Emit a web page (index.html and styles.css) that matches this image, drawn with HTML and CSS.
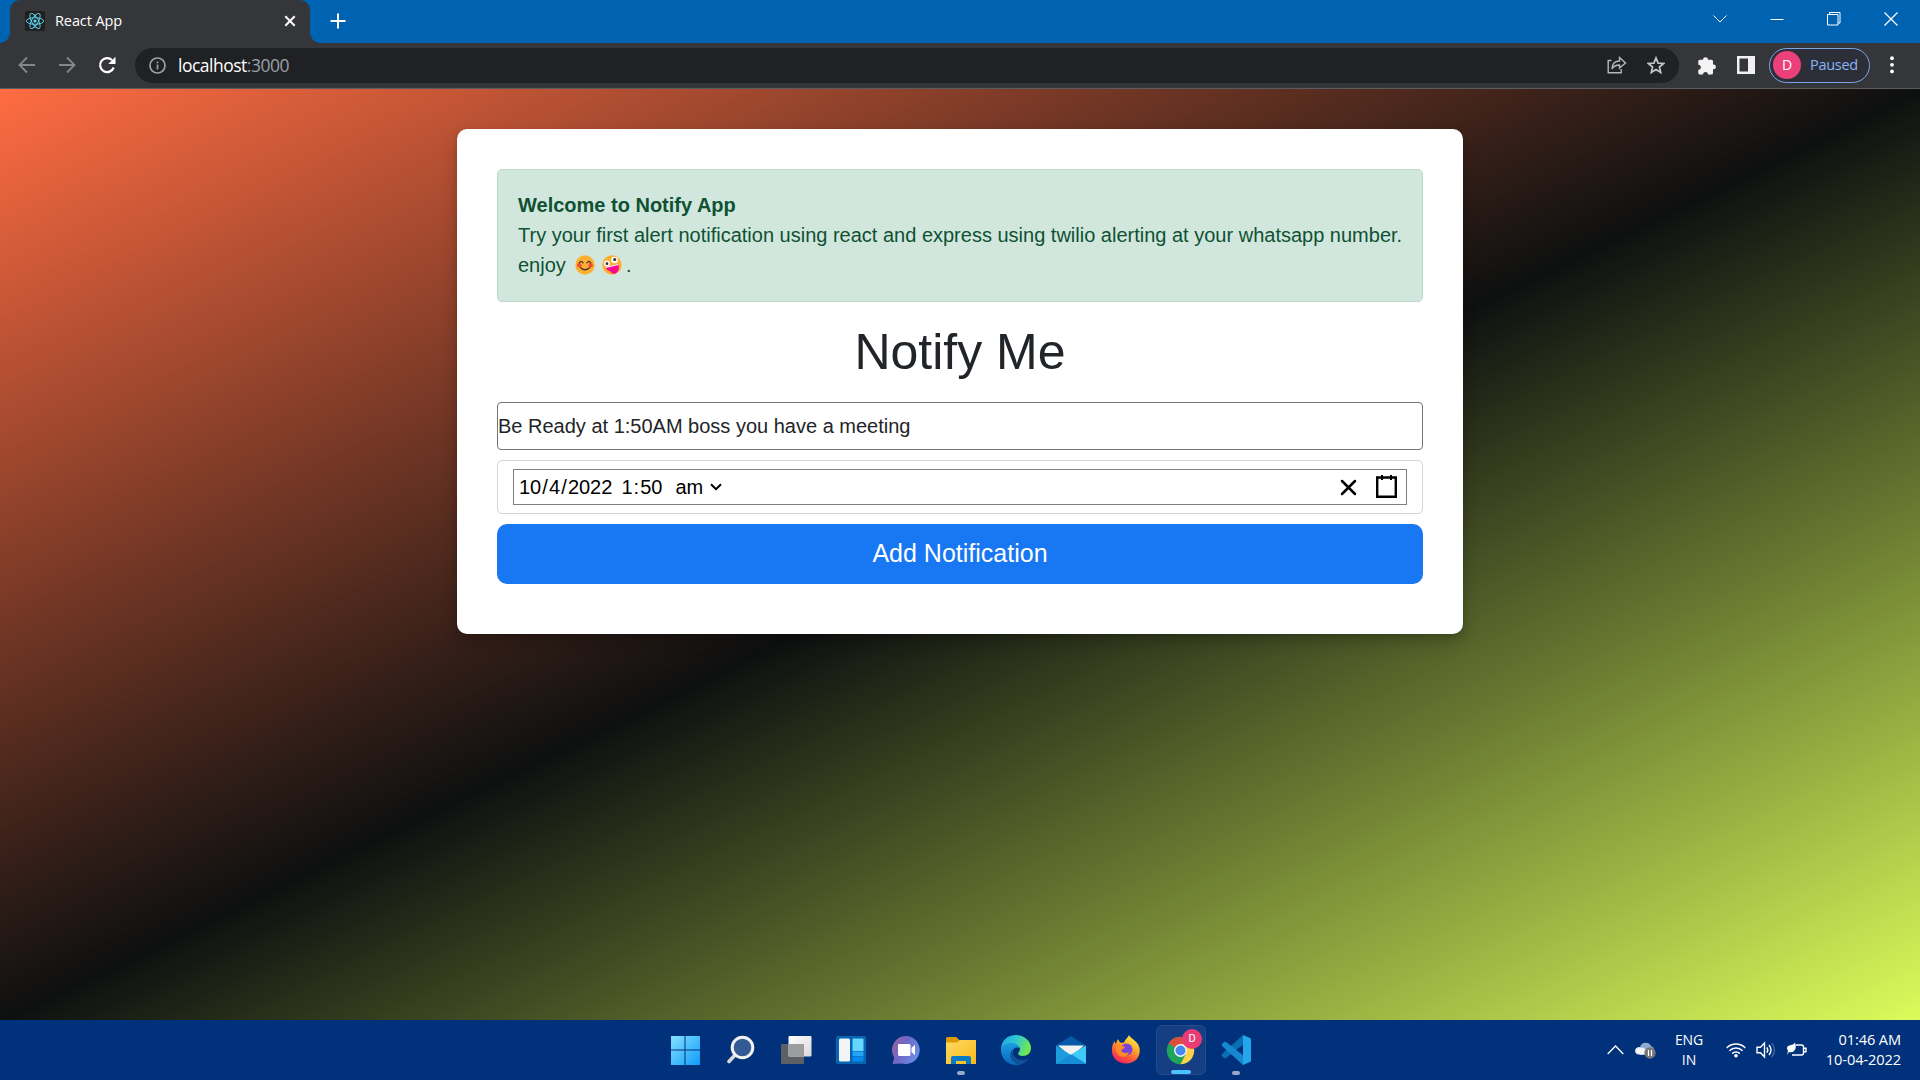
FILE: index.html
```html
<!DOCTYPE html>
<html lang="en">
<head>
<meta charset="utf-8">
<title>React App</title>
<link rel="stylesheet" href="styles.css">
</head>
<body>
<header class="tabstrip">
  <div class="tab">
    <svg class="favicon" width="20" height="20" viewBox="0 0 20 20"><rect width="20" height="20" rx="2" fill="#202020"/><g fill="none" stroke="#61dafb" stroke-width=".9"><ellipse cx="10" cy="10" rx="8.6" ry="3.3"/><ellipse cx="10" cy="10" rx="8.6" ry="3.3" transform="rotate(60 10 10)"/><ellipse cx="10" cy="10" rx="8.6" ry="3.3" transform="rotate(120 10 10)"/></g><circle cx="10" cy="10" r="1.6" fill="#61dafb"/></svg>
    <span class="tab-title">React App</span>
    <svg width="12" height="12" viewBox="0 0 12 12" stroke="#fff" stroke-width="2"><path d="M1.3 1.3l9.4 9.4M10.7 1.3l-9.4 9.4"/></svg>
  </div>
  <svg class="new-tab" width="16" height="16" viewBox="0 0 16 16" stroke="#fff" stroke-width="2"><path d="M8 .5v15M.5 8h15"/></svg>
  <div class="window-controls">
    <svg width="14" height="8" viewBox="0 0 14 8" fill="none" stroke="#fff"><path d="M.5.5L7 7 13.500.5"/></svg>
    <svg width="14" height="14" viewBox="0 0 14 14" stroke="#fff"><path d="M.5 7.500h13"/></svg>
    <svg width="14" height="14" viewBox="0 0 14 14" fill="none" stroke="#fff"><path d="M.5 2.500h10.500v10.500H.5zM2.500 2.500V.5H13v10.500h-2"/></svg>
    <svg width="14" height="14" viewBox="0 0 14 14" stroke="#fff" stroke-width="1.200"><path d="M.5.5l13 13M13.500.5l-13 13"/></svg>
  </div>
</header>
<nav class="toolbar">
  <div class="nav-buttons">
    <svg width="18" height="18" viewBox="0 0 18 18" fill="none" stroke="#85878a" stroke-width="1.800"><path d="M17 9H2M9 1.500L1.500 9 9 16.500"/></svg>
    <svg width="18" height="18" viewBox="0 0 18 18" fill="none" stroke="#85878a" stroke-width="1.800"><path d="M1 9h15M9 1.500L16.500 9 9 16.500"/></svg>
    <svg width="18" height="18" viewBox="0 0 18 18"><path d="M15.700 11.500A7 7 0 1 1 14 4" fill="none" stroke="#fff" stroke-width="2.200"/><path d="M17.500.7V8h-7.300z" fill="#fff"/></svg>
  </div>
  <div class="address">
    <svg width="17" height="17" viewBox="0 0 17 17" fill="none" stroke="#9aa0a6" stroke-width="1.700"><circle cx="8.500" cy="8.500" r="7.500"/><path d="M8.500 7.600v5M8.500 4.400v1.900"/></svg>
    <span class="url">localhost<i>:3000</i></span>
    <svg width="20" height="18" viewBox="0 0 20 18" fill="none" stroke="#b5b7b9" stroke-width="1.400"><path d="M4.500 4.500H1.200v12.300h13V13M5 13c.2-5 3-8 7.500-8V1.500L18.500 7l-6 5V9C9 9 6.500 10.300 5 13z"/></svg>
    <svg class="star" width="18" height="18" viewBox="0 0 18 18" fill="none" stroke="#c4c5c6" stroke-width="1.700"><path d="M9 1.900l2.100 5.200 5.500.4-4.200 3.600 1.300 5.400L9 13.600l-4.700 2.900 1.300-5.400L1.400 7.500l5.500-.4z"/></svg>
  </div>
  <div class="tools">
    <svg width="18" height="19" viewBox="0 0 18 19" fill="#f3f3f4"><path d="M5 3.700a2.500 2.500 0 0 1 5 0h3.500Q15 3.700 15 5.200v3.300h.5a2.400 2.400 0 0 1 0 4.800H15V17q0 1.500-1.500 1.500H10a2.500 2.500 0 0 0-5 0H1.800Q.3 18.500.3 17v-3.300a2.500 2.500 0 0 0 0-5V5.200Q.3 3.700 1.800 3.700z"/></svg>
    <svg width="18" height="18" viewBox="0 0 18 18"><path d="M0 0h18v18H0zM2.500 2.500v13H11v-13z" fill="#f1f1f2" fill-rule="evenodd"/></svg>
    <div class="profile"><b>D</b><span>Paused</span></div>
    <svg width="4" height="18" viewBox="0 0 4 18" fill="#fff"><circle cx="2" cy="2.200" r="1.900"/><circle cx="2" cy="8.800" r="1.900"/><circle cx="2" cy="15.400" r="1.900"/></svg>
  </div>
</nav>
<main class="page">
  <section class="card">
    <div class="alert"><strong>Welcome to Notify App</strong><p>Try your first alert notification using react and express using twilio alerting at your whatsapp number.<br>enjoy <svg class="emoji smile" width="20" height="20" viewBox="0 0 20 20"><circle cx="10" cy="10" r="9.700" fill="#fdb02f"/><g fill="#f5483b"><circle cx="4.300" cy="10.300" r="2.200"/><circle cx="15.700" cy="10.300" r="2.200"/></g><path d="M4.300 7.800q1.800-3 3.800 0M11.900 7.800q2-3 3.800 0M5.500 12.800q4.500 4 9 0" fill="none" stroke="#512c31" stroke-width="1.300" stroke-linecap="round"/></svg><svg class="emoji" width="20" height="20" viewBox="0 0 20 20"><circle cx="10" cy="10" r="9.700" fill="#fdb02f"/><path d="M3.500 12l12.700-3c1.600 4.500.2 8.300-3 9.700-2.500.7-4.500-1-5.200-2.700-2 0-3.800-1.500-4.500-4z" fill="#f70a8d"/><path d="M3.500 12l12.700-3 .2 1L3.800 13z" fill="#fff"/><circle cx="5" cy="8.500" r="2.900" fill="#fff"/><circle cx="12.500" cy="5" r="3.300" fill="#fff"/><circle cx="5" cy="8.700" r="1.400" fill="#402a32"/><circle cx="12.700" cy="4.500" r="1.600" fill="#402a32"/></svg>.</p></div>
    <h1>Notify Me</h1>
    <div class="message">Be Ready at 1:50AM boss you have a meeting</div>
    <div class="picker"><div class="datetime">
      <span class="date">10<i>/</i>4<i>/</i>2022</span><span class="time">1<i>:</i>50</span><span class="ampm">am</span>
      <svg width="12" height="8" viewBox="0 0 12 8" fill="none" stroke="#000" stroke-width="2"><path d="M1 1.200l5 5 5-5"/></svg>
      <svg class="clear" width="19" height="19" viewBox="0 0 19 19" stroke="#000" stroke-width="2.500" stroke-linecap="round"><path d="M3 3l13 13M16 3L3 16"/></svg>
      <svg class="calendar" width="21" height="23" viewBox="0 0 21 23"><path d="M1.200 2.500h18.600v19.200H1.200z" fill="none" stroke="#000" stroke-width="2.400"/><path d="M5 0h2v5H5zM14 0h2v5h-2z"/></svg>
    </div></div>
    <button class="submit">Add Notification</button>
  </section>
</main>
<footer class="taskbar">
  <div class="side"></div>
  <div class="apps">
    <div class="app"><svg width="30" height="30" viewBox="0 0 30 30"><defs><linearGradient id="win" x2="1" y2="1" gradientUnits="objectBoundingBox"><stop stop-color="#85e1fe"/><stop offset="1" stop-color="#0d9bfa"/></linearGradient></defs><path d="M1.500 1H14.500V14.500H1V1.500zM15.500 1H29.500L30 1.500V14.500H15.500zM1 15.500H14.500V30H1zM15.500 15.500H30V30H15.500z" fill="url(#win)"/></svg></div>
    <div class="app"><svg width="28" height="30" viewBox="0 0 28 30"><path d="M9 19L2 26.500" stroke="#d5d8dd" stroke-width="3.600" stroke-linecap="round"/><circle cx="15.500" cy="12.500" r="10.300" fill="#335a94" stroke="#f2f2f2" stroke-width="3"/></svg></div>
    <div class="app"><svg width="31" height="30" viewBox="0 0 31 30"><defs><linearGradient id="view" x2="1" y2="1"><stop stop-color="#fff"/><stop offset="1" stop-color="#d9d9d9"/></linearGradient></defs><rect y="9" width="23" height="20" rx="1" fill="#5d6065"/><rect x="7.500" y="1" width="23" height="20.500" rx="1" fill="url(#view)"/><path d="M7.500 9H23v12.500H7.500z" fill="#9b9ea1"/></svg></div>
    <div class="app"><svg width="30" height="30" viewBox="0 0 30 30"><rect y="1" width="30" height="28" rx="1.500" fill="#0865b1"/><rect x="3" y="3.500" width="11" height="23" rx="1.500" fill="#f2f4f6"/><path d="M16.500 4.500q0-1 1-1h9q1 0 1 1V16h-11z" fill="#64d6ff"/><path d="M16.500 16.500h11V21h-11z" fill="#25a5f5"/><path d="M16.500 21.500h11v4q0 1-1 1h-9q-1 0-1-1z" fill="#0889ef"/></svg></div>
    <div class="app"><svg width="30" height="30" viewBox="0 0 30 30"><defs><linearGradient id="chat" x2="1" y2=".5"><stop stop-color="#9c619f"/><stop offset=".5" stop-color="#7067c7"/><stop offset="1" stop-color="#698be5"/></linearGradient></defs><path d="M15 1a14 14 0 1 1-4 27.500L1.500 29l1.700-6.500A14 14 0 0 1 15 1z" fill="url(#chat)"/><path d="M7 10q0-1 1-1h10q1.500 0 1.500 1.500v9q0 1.500-1.500 1.500H8.500Q7 21 7 19.500zM20.500 13l3.500-3.200V20.200L20.500 17z" fill="#fff"/></svg></div>
    <div class="app running"><svg width="30" height="30" viewBox="0 0 30 30"><defs><linearGradient id="folder" x2="1" y2="1"><stop stop-color="#ffd965"/><stop offset="1" stop-color="#fbb919"/></linearGradient></defs><path d="M0 3.500Q0 2 1.500 2H10l4 3.500h14q2 0 2 2V15H0z" fill="#df9b05"/><path d="M0 7.500h11l3-2.500h16v24H0z" fill="url(#folder)"/><path d="M5 29v-6q0-2 2-2h16q2 0 2 2v6h-5v-3H10v3z" fill="#087ac6"/></svg></div>
    <div class="app"><svg width="30" height="30" viewBox="0 0 30 30"><defs><linearGradient id="edge" x2="1" y2=".3"><stop stop-color="#20a6e5"/><stop offset=".55" stop-color="#31c8cf"/><stop offset="1" stop-color="#70e950"/></linearGradient><linearGradient id="edge2" x2="0" y2="1"><stop stop-color="#1b9de2"/><stop offset="1" stop-color="#0967bb"/></linearGradient></defs><path d="M0 15C0 5 7 0 15 0s15 6 15 13c0 5-3.500 8-8.500 8-4 0-5-2-4-3.500 1-1 1.500-2 1.300-4C18 9.500 10 5 0 15z" fill="url(#edge)"/><path d="M0 15C1 10 5 8 10 8c4.500 0 8 2 8.800 5-5-2-8 1.500-7 6 1.200 5 6.500 8 14 5.500C22.500 29 18.500 30 15 30 6 30 0 23 0 15z" fill="url(#edge2)"/><path d="M12 13.500c-5 5-3 14 6.500 16.100 4-.9 7.500-3 9-6.100-4 2-9 2.300-12.500-.5-3-2.500-4.500-6-3-9.500z" fill="#12509a"/></svg></div>
    <div class="app"><svg width="30" height="30" viewBox="0 0 30 30"><path d="M0 10.500L15 1l15 9.500V15H0z" fill="#075aa8"/><path d="M2 10.500h26L17 20h-4z" fill="#f2f2f2"/><path d="M0 10.500L15 20l15 9H0z" fill="#1d9ddd"/><path d="M30 10.500V29L15 19.500z" fill="#3ecaf8"/><path d="M0 29l15-9.500L30 29z" fill="#168dd7"/></svg></div>
    <div class="app"><svg width="30" height="30" viewBox="0 0 30 30"><defs><linearGradient id="fox" x1=".8" y1="0" x2=".3" y2="1"><stop stop-color="#fff34d"/><stop offset=".4" stop-color="#ffac2a"/><stop offset=".7" stop-color="#ff5a36"/><stop offset="1" stop-color="#f02167"/></linearGradient></defs><path d="M18 0c2 4 9 6 10.500 13C30 22 24 28.500 15 28.500S0 22 1 13c.2-3 1.500-5 2.500-7l1 3L7 4l2 3.500 4 .3C14 4 17 3 18 0z" fill="url(#fox)"/><circle cx="15.500" cy="14.500" r="6" fill="#7545da"/><path d="M5 11c3-1.500 6 0 9 1-1 2-3 2-4 4 2 2 5 3 8 1-1 4-5 6-9 4-3-2-5-6-4-10z" fill="#ff8b26"/></svg></div>
    <div class="app active"><svg width="30" height="30" viewBox="0 0 30 30"><circle cx="14.500" cy="15.500" r="13.700" fill="#1fa55b"/><path d="M14.500 15.500L2.600 8.600A13.700 13.700 0 0 1 26.400 8.600z" fill="#dc4d40"/><path d="M14.500 9.300h12.200A13.700 13.700 0 0 1 14.500 29.200l5.500-10.500z" fill="#ffd04a"/><circle cx="14.500" cy="15.500" r="6.400" fill="#f4f7fb"/><circle cx="14.500" cy="15.500" r="5" fill="#4687f2"/></svg><b class="badge">D</b></div>
    <div class="app running"><svg width="30" height="30" viewBox="0 0 30 30"><path d="M22 0L1 19q-1 1 0 2l2 2q1 .8 2 0L23 9z" fill="#0b6fb5"/><path d="M22 30L1 11q-1-1 0-2l2-2q1-.8 2 0L23 21z" fill="#1688d2"/><path d="M22 0l7 3q1 .5 1 1.500v21q0 1-1 1.500l-7 3z" fill="#25a5ee"/></svg></div>
  </div>
  <div class="side tray">
    <svg width="17" height="10" viewBox="0 0 17 10" fill="none" stroke="#fff" stroke-width="1.300"><path d="M.7 9L8.500 1l7.800 8"/></svg>
    <svg class="cloud" width="21" height="18" viewBox="0 0 21 18"><path d="M5 7a5.800 5.800 0 0 1 11-2 5 5 0 0 1 1 9H5z" fill="#8eaad0"/><path d="M4 13.500a3.700 3.700 0 1 1 1.500-7q4-.5 6 3.500l2 3.500z" fill="#f1f4f8"/><circle cx="15" cy="12" r="5.700" fill="#777"/><path d="M13.500 9v6M16.500 9v6" stroke="#fff" stroke-width="1.200"/></svg>
    <div class="lang">ENG<br>IN</div>
    <svg class="wifi" width="20" height="16" viewBox="0 0 20 16" fill="none" stroke="#fff" stroke-width="1.500"><path d="M.7 6a13 13 0 0 1 18.600 0M3.400 8.800a9.300 9.300 0 0 1 13.200 0M6.200 11.600a5.400 5.400 0 0 1 7.600 0"/><circle cx="10" cy="13.800" r="1.800" fill="#fff" stroke="none"/></svg>
    <svg class="sound" width="20" height="18" viewBox="0 0 20 18" fill="none" stroke="#fff" stroke-width="1.400"><path d="M1 6.300h3.500L8.500 2v14l-4-4.300H1zM10.800 6.300q2 2.700 0 5.400M13 4q4 5 0 10"/><path d="M15.700 2q5.500 7 0 14" stroke="#40669f"/></svg>
    <svg class="battery" width="21" height="16" viewBox="0 0 21 16" fill="none" stroke="#fff" stroke-width="1.400"><path d="M10 3h5.500q2 0 2 2v6q0 2-2 2H6"/><path d="M18 6.300h2v3.400h-2"/><path d="M9 .5q2 6-1 8.500-2 2-5 1L1 13l1-4Q-1 4 5 3q3-.5 4-2.500z" fill="#fff" stroke="none"/></svg>
    <div class="clock">01:46 AM<br>10-04-2022</div>
  </div>
</footer>
</body>
</html>
```
FILE: styles.css
```css
* { box-sizing: border-box; }
body { margin: 0; height: 1080px; overflow: hidden; display: flex; flex-direction: column; font-family: "Liberation Sans", Arial, sans-serif; }
svg { display: block; flex: none; }
i { font-style: normal; }
.tabstrip, .toolbar, .taskbar { font-family: "Open Sans", "Noto Sans", sans-serif; }

.tabstrip { height: 43px; background: #0063b1; display: flex; align-items: flex-start; padding-left: 10px; flex: none; }
.tab { position: relative; width: 300px; height: 43px; background: #35363a; border-radius: 10px 10px 0 0; display: flex; align-items: center; padding: 0 14px 1px 15px; color: #fff; font-size: 14.500px; }
.tab::before, .tab::after { content: ""; position: absolute; bottom: 0; width: 10px; height: 10px; }
.tab::before { left: -10px; background: radial-gradient(circle at 0 0, #0063b1 9.500px, #35363a 10px); }
.tab::after { right: -10px; background: radial-gradient(circle at 100% 0, #0063b1 9.500px, #35363a 10px); }
.tab-title { margin-left: 10px; padding-bottom: 2px; flex: 1; letter-spacing: -.1px; }
.new-tab { margin: 13px 0 0 19.500px; }
.window-controls { margin-left: auto; display: flex; align-items: center; gap: 43px; height: 37px; padding-right: 22px; }

.toolbar { height: 46px; background: #35363a; border-bottom: 1px solid #5b5c5f; display: flex; align-items: center; flex: none; padding-bottom: 1px; }
.nav-buttons { display: flex; gap: 22px; width: 135px; padding-left: 18px; }
.address { width: 1544px; height: 35px; border-radius: 18px; background: #202124; display: flex; align-items: center; padding: 0 14px; }
.url { color: #fff; font-size: 17.500px; margin-left: 12px; flex: 1; letter-spacing: -.5px; }
.url i { color: #9aa0a6; }
.star { margin-left: 20px; }
.tools { display: flex; align-items: center; margin-left: 19px; }
.tools > svg + svg { margin-left: 21px; }
.profile { width: 101px; height: 35px; border: 1.500px solid #7fa4e6; border-radius: 18px; margin: 0 20px 0 14px; background: #2c2f38; display: flex; align-items: center; padding-left: 3px; gap: 9px; font-size: 14.500px; letter-spacing: -.3px; color: #8ab4f8; }
.profile span { padding-bottom: 1px; }
.profile b { width: 28px; height: 28px; border-radius: 50%; background: #ec407a; color: #fff; font-weight: 500; font-size: 14px; text-align: center; line-height: 28px; }

.page { flex: 1; background: linear-gradient(to bottom right, #ff6c42, #0e1010 50%, #dafc5a); padding-top: 40px; }
.card { width: 1006px; height: 505px; margin: 0 auto; background: #fff; border-radius: 10px; padding: 40px; box-shadow: 0 8px 16px rgba(0, 0, 0, .2), 0 2px 4px rgba(0, 0, 0, .1); display: flex; flex-direction: column; }
.alert { height: 133px; border: 1px solid #badbcc; border-radius: 5px; background: #d1e7dd; color: #0f5132; padding: 20px; font-size: 20px; line-height: 30px; flex: none; }
.alert p { margin: 0; white-space: nowrap; }
.emoji { display: inline-block; vertical-align: -3px; margin: 0 3.500px; }
.smile { margin-left: 4px; }
h1 { margin: 17px 0 0; height: 83px; font-size: 50px; line-height: 66px; font-weight: 400; color: #212529; text-align: center; }
.message { height: 48px; border: 1px solid #767676; border-radius: 4px; font-size: 20px; line-height: 46px; color: #212529; flex: none; }
.picker { height: 54px; margin-top: 10px; border: 1px solid #ced4da; border-radius: 5px; padding: 8px 15px; flex: none; }
.datetime { height: 36px; border: 1px solid #808080; display: flex; align-items: center; font-size: 20px; padding: 0 9px 0 5px; color: #000; }
.datetime i { padding: 0 1.100px; }
.time { margin-left: 9px; }
.ampm { margin: 0 7px 0 13px; }
.clear { margin-left: auto; }
.calendar { margin-left: 18.500px; margin-top: -2px; }
.submit { height: 60px; margin-top: 10px; border: 0; border-radius: 10px; padding: 0 0 2px; background: #1877f2; color: #fff; font: 25px "Liberation Sans", Arial, sans-serif; flex: none; }

.taskbar { height: 60px; background: #00317a; display: flex; flex: none; color: #fff; }
.side { width: 661px; flex: none; }
.apps { display: flex; gap: 5px; padding: 5px 0; }
.app { position: relative; width: 50px; height: 50px; border-radius: 6px; display: flex; align-items: center; justify-content: center; }
.app:first-child svg { margin-left: -2px; }
.app.active { background: #163f83; border: 1px solid #244b8a; }
.app.running::after, .app.active::after { content: ""; position: absolute; bottom: 0; width: 8px; height: 4px; border-radius: 2px; background: #98a9c7; }
.app.active::after { width: 20px; background: #4cc2ff; }
.badge { position: absolute; left: 25px; top: 3px; width: 20px; height: 20px; border-radius: 50%; background: #e93c75; font: 11px/20px Roboto, sans-serif; text-align: center; }
.tray { display: flex; align-items: center; justify-content: flex-end; width: auto; flex: 1; padding-right: 19px; font-size: 14px; line-height: 20px; letter-spacing: -.1px; }
.cloud { margin-left: 11px; }
.lang { width: 34px; text-align: center; margin-left: 16px; }
.wifi { margin-left: 20px; }
.sound { margin-left: 10px; }
.battery { margin-left: 10px; }
.clock { width: 78px; margin-left: 16px; padding-bottom: 2px; font-size: 14.600px; text-align: right; white-space: nowrap; }
```
